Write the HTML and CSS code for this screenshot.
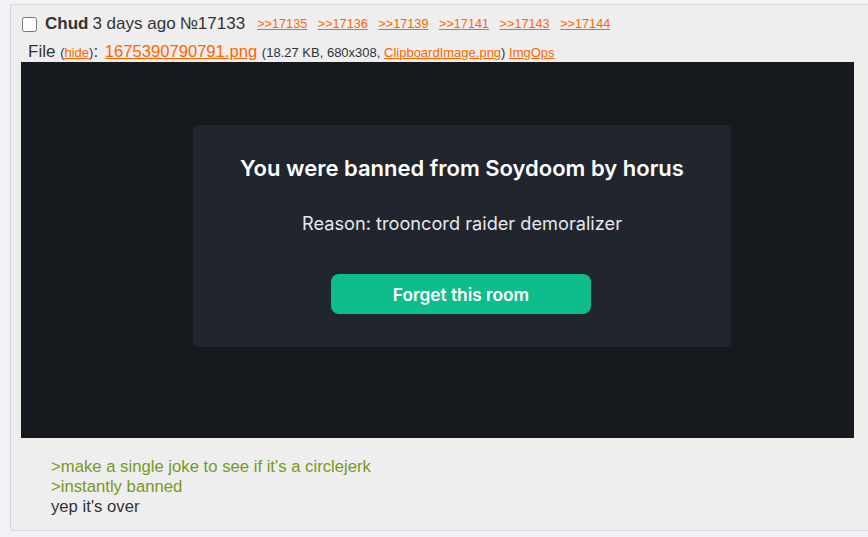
FILE: index.html
```html
<!DOCTYPE html>
<html lang="en">
<head>
  <meta charset="UTF-8">
  <title>Chud No.17133</title>
  <link rel="stylesheet" href="styles.css">
</head>
<body>
  <div class="post">
    <div class="post-head">
      <input type="checkbox" class="post-check">
      <span class="name">Chud</span>
      <span class="time">3 days ago</span>
      <span class="num">№17133</span>
      <span class="replies">
        <a href="#p17135">&gt;&gt;17135</a>
        <a href="#p17136">&gt;&gt;17136</a>
        <a href="#p17139">&gt;&gt;17139</a>
        <a href="#p17141">&gt;&gt;17141</a>
        <a href="#p17143">&gt;&gt;17143</a>
        <a href="#p17144">&gt;&gt;17144</a>
      </span>
    </div>

    <div class="file-info">
      File <small>(<a href="#">hide</a>)</small>: <a href="#" class="file-name">1675390790791.png</a>
      <small>(18.27 KB, 680x308, <a href="#">ClipboardImage.png</a>) <a href="#">ImgOps</a></small>
    </div>

    <!-- the attached screenshot -->
    <div class="file-image">
      <div class="ban-card">
        <h2>You were banned from Soydoom by horus</h2>
        <p>Reason: trooncord raider demoralizer</p>
        <button class="forget-btn">Forget this room</button>
      </div>
    </div>

    <blockquote class="post-body">
      <span class="quote">&gt;make a single joke to see if it's a circlejerk</span><br>
      <span class="quote">&gt;instantly banned</span><br>
      yep it's over
    </blockquote>
  </div>
</body>
</html>
```

FILE: styles.css
```css
body {
  font-family: Arial, "Liberation Sans", sans-serif;
  background-color: #f1f2f6;
  color: #333;
  margin: 0;
  padding: 4px 0 0 10px;
  overflow: hidden;
}

a {
  color: #ff6600;
}

.post {
  background-color: #eeeeee;
  border: 1px solid #d9d9d9;
  border-right: none;
  border-radius: 3px 0 0 3px;
  padding: 8px 0 0 10px;
  height: 527px;
  box-sizing: border-box;
}

.post-head {
  display: flex;
  align-items: center;
  font-size: 17px;
  height: 22px;
}

.post-check {
  width: 15px;
  height: 15px;
  margin: 0 8px 0 1px;
}

.name {
  font-weight: bold;
  margin-right: 4px;
}

.time {
  margin-right: 4px;
}

.replies {
  margin-left: 12px;
  font-size: 12.7px;
  display: flex;
  gap: 10.5px;
}

.file-info {
  font-size: 17px;
  margin: 8px 0 0 7px;
  line-height: 18px;
}

.file-info small {
  font-size: 13px;
}

.file-name {
  font-size: 16.6px;
  margin-left: 2px;
}

.file-image {
  width: 833px;
  height: 376px;
  background-color: #16191e;
  display: flex;
  align-items: center;
  justify-content: center;
}

.ban-card {
  width: 538px;
  height: 222px;
  box-sizing: border-box;
  margin: 0 0 28px 49px;
  background-color: #21262e;
  border-radius: 5px;
  text-align: center;
  font-family: Inter, "Noto Sans", sans-serif;
  padding-top: 30px;
}

.ban-card h2 {
  margin: 0;
  color: #fff;
  font-size: 22px;
  font-weight: 600;
  line-height: 26px;
}

.ban-card p {
  margin: 31px 0 0;
  color: #e6e8ec;
  font-size: 18.2px;
  line-height: 22px;
}

.forget-btn {
  margin: 40px 0 0 -2px;
  width: 260px;
  height: 40px;
  border: none;
  border-radius: 8px;
  background-color: #0dbd8b;
  color: #fff;
  font-family: Inter, "Noto Sans", sans-serif;
  font-size: 17.3px;
  font-weight: 600;
}

.post-body {
  margin: 19px 0 0 30px;
  font-size: 16.7px;
  line-height: 20px;
}

.quote {
  color: #789922;
}
```
